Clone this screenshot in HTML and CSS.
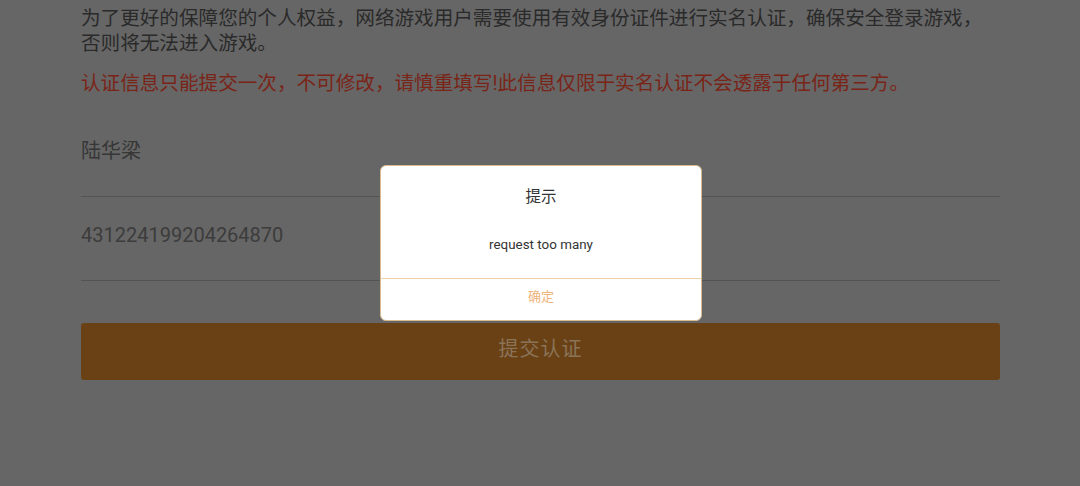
FILE: index.html
```html
<!DOCTYPE html>
<html lang="zh-CN">
<head>
<meta charset="utf-8">
<title>实名认证</title>
<link rel="stylesheet" href="styles.css">
</head>
<body>
<main class="page">
  <p class="intro">为了更好的保障您的个人权益，网络游戏用户需要使用有效身份证件进行实名认证，确保安全登录游戏，否则将无法进入游戏。</p>
  <p class="warn">认证信息只能提交一次，不可修改，请慎重填写!此信息仅限于实名认证不会透露于任何第三方。</p>
  <div class="field"><span class="value">陆华梁</span></div>
  <div class="field"><span class="value num">431224199204264870</span></div>
  <button class="submit" type="button">提交认证</button>
</main>
<div class="mask">
  <div class="dialog">
    <div class="dialog-title">提示</div>
    <div class="dialog-msg">request too many</div>
    <div class="dialog-foot">确定</div>
  </div>
</div>
</body>
</html>
```
FILE: styles.css
```css
html, body {
  margin: 0;
  padding: 0;
  background: #666666;
  width: 1080px;
  height: 486px;
  overflow: hidden;
  font-family: Roboto, "Noto Sans CJK SC", sans-serif;
}
.page {
  padding: 6px 80px 0 81px;
  display: flex;
  flex-direction: column;
}
.intro {
  margin: 0;
  font-size: 19.6px;
  line-height: 25px;
  color: #2a2a2a;
}
.warn {
  margin: 15px 0 0;
  font-size: 19.6px;
  line-height: 25px;
  color: #7a2418;
  white-space: nowrap;
}
.field {
  border-bottom: 1px solid #535353;
  padding-top: 26px;
  height: 57px;
}
.field:first-of-type {
  margin-top: 17px;
}
.value {
  display: block;
  font-size: 20px;
  line-height: 24px;
  color: #363636;
}
.num {
  color: #3c3c3c;
}
.submit {
  margin-top: 42px;
  height: 57px;
  border: none;
  border-radius: 3px;
  background: #6a4115;
  color: #8a7459;
  font-family: Roboto, "Noto Sans CJK SC", sans-serif;
  font-size: 20px;
  letter-spacing: 1px;
  padding: 0 0 9px;
}
.mask {
  position: absolute;
  inset: 0;
}
.dialog {
  position: absolute;
  left: 380px;
  top: 165px;
  width: 320px;
  height: 154px;
  background: #ffffff;
  border: 1px solid #d9b98e;
  border-radius: 6px;
  display: flex;
  flex-direction: column;
  align-items: stretch;
  text-align: center;
}
.dialog-title {
  padding-top: 19px;
  font-size: 15.5px;
  line-height: 24px;
  color: #333333;
}
.dialog-msg {
  margin-top: 26px;
  font-size: 13.4px;
  line-height: 20px;
  color: #333333;
}
.dialog-foot {
  margin-top: auto;
  border-top: 1px solid #f1cfa6;
  height: 41px;
  line-height: 35px;
  font-size: 13px;
  color: #eeb47a;
}
```
